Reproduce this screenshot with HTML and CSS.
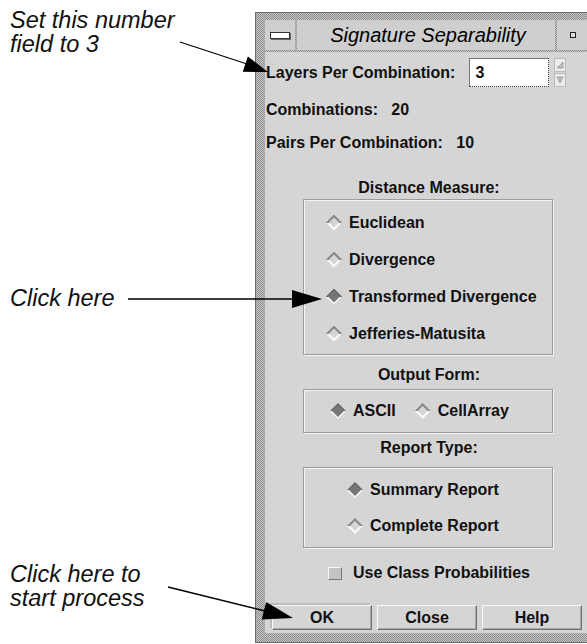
FILE: index.html
```html
<!DOCTYPE html>
<html lang="en">
<head>
  <meta charset="UTF-8" />
  <meta name="viewport" content="width=device-width, initial-scale=1.0"/>
  <title>Signature Separability</title>
  <link rel="stylesheet" href="styles.css">
</head>
<body>
  <div class="page">
    <div class="notes">
      <p class="note note-top">Set this number<br>field to 3</p>
      <p class="note note-mid">Click here</p>
      <p class="note note-bottom">Click here to<br>start process</p>
    </div>

    <div class="window">
      <div class="titlebar">
        <div class="tb-btn menu-btn"><span class="bar-icon"></span></div>
        <div class="title">Signature Separability</div>
        <div class="tb-btn min-btn"><span class="dot-icon"></span></div>
      </div>

      <div class="panel">
        <div class="field-row">
          <span>Layers Per Combination:</span>
          <div class="num-field">3</div>
          <div class="spin">
            <span class="spin-btn"><svg width="8" height="8" viewBox="0 0 8 8"><path d="M1 7 L7 1 L7 7 Z" fill="#bdbdbd" stroke="#999" stroke-width="0.8"/></svg></span>
            <span class="spin-btn"><svg width="8" height="8" viewBox="0 0 8 8"><path d="M1 1 L7 1 L4 7 Z" fill="#bdbdbd" stroke="#999" stroke-width="0.8"/></svg></span>
          </div>
        </div>

        <div class="info info-combos">Combinations:&nbsp;&nbsp; 20</div>
        <div class="info info-pairs">Pairs Per Combination:&nbsp;&nbsp; 10</div>

        <div class="group-label label-distance">Distance Measure:</div>
        <div class="group group-distance">
          <div class="radio"><span class="diamond"></span>Euclidean</div>
          <div class="radio"><span class="diamond"></span>Divergence</div>
          <div class="radio"><span class="diamond on"></span>Transformed Divergence</div>
          <div class="radio"><span class="diamond"></span>Jefferies-Matusita</div>
        </div>

        <div class="group-label label-output">Output Form:</div>
        <div class="group group-output">
          <div class="radio"><span class="diamond on"></span>ASCII</div>
          <div class="radio"><span class="diamond"></span>CellArray</div>
        </div>

        <div class="group-label label-report">Report Type:</div>
        <div class="group group-report">
          <div class="radio"><span class="diamond on"></span>Summary Report</div>
          <div class="radio"><span class="diamond"></span>Complete Report</div>
        </div>

        <div class="check-row"><span class="checkbox"></span>Use Class Probabilities</div>

        <div class="buttons">
          <button class="btn btn-default">OK</button>
          <button class="btn">Close</button>
          <button class="btn">Help</button>
        </div>
      </div>
    </div>

    <svg class="arrows" width="587" height="644" viewBox="0 0 587 644">
      <line x1="180" y1="42" x2="247" y2="64" stroke="#000" stroke-width="1.3"/>
      <polygon points="268,72 242.7,71.8 247.9,56.6" fill="#000"/>
      <line x1="128" y1="299" x2="294" y2="299" stroke="#000" stroke-width="1.3"/>
      <polygon points="322,299 292,290 292,308" fill="#000"/>
      <line x1="168" y1="587" x2="265" y2="611" stroke="#000" stroke-width="1.3"/>
      <polygon points="293,618 266.1,602.1 261.7,619.5" fill="#000"/>
    </svg>
  </div>
</body>
</html>
```

FILE: styles.css
```css
body {
  margin: 0;
  background: #fff;
  font-family: "Liberation Sans", Arial, sans-serif;
  overflow: hidden;
}
.page {
  position: relative;
  display: grid;
  grid-template-columns: 255px 332px;
  width: 587px;
  height: 644px;
  overflow: hidden;
}
.note {
  margin: 0 0 0 10px;
  font-size: 23.5px;
  line-height: 24px;
  font-style: italic;
  color: #111;
  white-space: nowrap;
}
.note-top { margin-top: 8px; }
.note-mid { margin-top: 230px; }
.note-bottom { margin-top: 252px; }

.arrows {
  position: absolute;
  top: 0;
  left: 0;
  pointer-events: none;
}

/* window frame, cut off at the right edge of the shot */
.window {
  margin-top: 12px;
  height: 613px;
  border: 1px solid #6e6e6e;
  border-right: 0;
  padding: 7px 0 9px 9px;
  background-color: #a8a8a8;
  background-image: repeating-conic-gradient(#8e8e8e 0 25%, #c6c6c6 0 50%);
  background-size: 2px 2px;
}
.titlebar {
  display: flex;
  gap: 2px;
  height: 30px;
  padding-bottom: 2px;
}
.tb-btn, .title {
  background: #cfcfcf;
  display: flex;
  align-items: center;
  justify-content: center;
}
.menu-btn { width: 30px; }
.min-btn { width: 30px; }
.title {
  flex: 1;
  font-size: 20px;
  font-style: italic;
  color: #000;
  padding-left: 4px;
}
.bar-icon {
  width: 18px;
  height: 5px;
  background: #fff;
  border: 1px solid #333;
  box-shadow: 1px 1px 0 #666;
}
.dot-icon {
  width: 4px;
  height: 4px;
  background: #ddd;
  border: 1px solid #222;
  margin-left: 2px;
}

/* panel contents */
.panel {
  background: #d5d5d5;
  height: 581px;
  padding-left: 1px;
  font-size: 16px;
  font-weight: bold;
  color: #111;
  overflow: hidden;
}
.field-row {
  display: flex;
  align-items: center;
  height: 29px;
  padding-top: 6px;
}
.num-field {
  margin-left: 14px;
  width: 73px;
  height: 27px;
  line-height: 27px;
  padding-left: 5px;
  background: #fff;
  border: 1px solid #777;
  border-right: 1px dotted #333;
  border-bottom: 1px dotted #333;
}
.spin {
  margin-left: 5px;
  display: flex;
  flex-direction: column;
  gap: 1px;
}
.spin-btn {
  width: 10px;
  height: 12px;
  background: #ececec;
  border: 1px solid #bbb;
  display: flex;
  align-items: center;
  justify-content: center;
}
.info {
  height: 24px;
  line-height: 24px;
}
.info-combos { margin-top: 11px; }
.info-pairs { margin-top: 9px; }

.group-label {
  width: 326px;
  text-align: center;
  height: 22px;
  line-height: 22px;
}
.label-distance { margin-top: 22px; }
.label-output { margin-top: 9px; }
.label-report { margin-top: 4px; }

.group {
  width: 248px;
  margin-left: 37px;
  border: 1px solid #9c9c9c;
  box-shadow: inset 1px 1px 0 #f4f4f4, 1px 1px 0 #f4f4f4;
}
.group-distance {
  padding: 4px 0 2px 22px;
  width: 226px;
}
.group-distance .radio { height: 37px; }
.group-output {
  display: flex;
  margin-top: 3px;
  height: 42px;
  padding-left: 26px;
  width: 222px;
  gap: 19px;
}
.group-output .radio { height: 42px; }
.group-report {
  margin-top: 8px;
  padding: 4px 0 3px 43px;
  width: 205px;
}
.group-report .radio { height: 36px; }
.radio {
  display: flex;
  align-items: center;
  gap: 7px;
}
.diamond {
  width: 16px;
  height: 16px;
  flex: none;
  background: linear-gradient(180deg, #8a8a8a 0 50%, #fafafa 50% 100%);
  clip-path: polygon(50% 0, 100% 50%, 50% 100%, 0 50%);
  position: relative;
}
.diamond::after {
  content: "";
  position: absolute;
  inset: 3px;
  background: #d5d5d5;
  clip-path: polygon(50% 0, 100% 50%, 50% 100%, 0 50%);
}
.diamond.on {
  background: linear-gradient(180deg, #666 0 50%, #fafafa 50% 100%);
}
.diamond.on::after {
  inset: 2px;
  background: #767676;
}

.check-row {
  width: 326px;
  margin-top: 14px;
  height: 22px;
  display: flex;
  align-items: center;
  justify-content: center;
  gap: 11px;
}
.checkbox {
  width: 12px;
  height: 11px;
  background: #c4c4c4;
  border-top: 1px solid #f6f6f6;
  border-left: 1px solid #f6f6f6;
  border-right: 1px solid #777;
  border-bottom: 1px solid #777;
}

.buttons {
  display: flex;
  gap: 5px;
  margin-top: 21px;
  padding-left: 6px;
}
.btn {
  width: 100px;
  height: 25px;
  padding: 0;
  font-family: inherit;
  font-size: 16px;
  font-weight: bold;
  color: #111;
  background: #d5d5d5;
  border-top: 1px solid #fafafa;
  border-left: 1px solid #fafafa;
  border-right: 1px solid #707070;
  border-bottom: 1px solid #707070;
  box-shadow: inset -1px -1px 0 #a8a8a8;
}
.btn-default {
  box-shadow: inset -1px -1px 0 #a8a8a8, -2px -2px 0 #bdbdbd;
}
```
